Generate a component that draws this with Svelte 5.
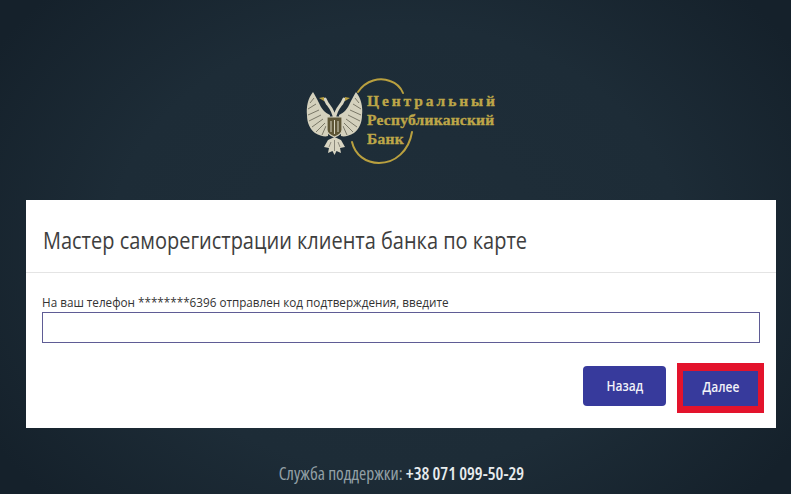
<script>
  const title = 'Мастер саморегистрации клиента банка по карте';
  const feathers = [
    'M24 33L20 38', 'M26 39L18 44', 'M29 45L18 50', 'M31 50L19 56', 'M33 54L22 62', 'M35 58L26 67', 'M36 61L32 70'
  ];
</script>

<div class="page">
  <div class="logo">
    <svg class="mark" viewBox="0 0 220 110" width="220" height="110" aria-hidden="true">
      <path class="ring" d="M68 27C76 15 90 12 100 16C106 18 111 23 113 28" />
      <path class="ring" d="M62 77C65 90 76 98 89 98C105 98 119 86 122 67" />
      <g class="wing">
        <path d="M23 27C18 33 16 42 17 50C17 58 20 64 25 68C30 71 35 72 38 71L40 50C35 48 31 43 29 38C27 34 25 30 23 27Z" fill="#d4d1bd" />
        {#each feathers as d}<path class="feather" {d} />{/each}
      </g>
      <g class="wing" transform="translate(89 0) scale(-1 1)">
        <path d="M23 27C18 33 16 42 17 50C17 58 20 64 25 68C30 71 35 72 38 71L40 50C35 48 31 43 29 38C27 34 25 30 23 27Z" fill="#d4d1bd" />
        {#each feathers as d}<path class="feather" {d} />{/each}
      </g>
      <path class="neck" d="M44.5 54C44 46 40 42 37 38L35 34M44.5 54C45 46 49 42 52 38L54 34" />
      <path d="M34 32L29 33L34 36ZM55 32L60 33L55 36Z" fill="#b9a03f" />
      <path d="M37 52H52V65C52 69 47 71 44.5 72C42 71 37 69 37 65Z" fill="#5e5636" stroke="#d4d1bd" stroke-width="1.2" />
      <path d="M41 56V67M44.5 55V69M48 56V67" stroke="#d8d5c2" stroke-width="1" />
      <path d="M38 75L44.5 72L51 75L55 82L50 83L51 88L46.5 86L44.5 90L42.5 86L38 88L39 83L34 82Z" fill="#d8d5c2" />
      <path d="M44.5 75V86M41 77L39 82M48 77L50 82" stroke="#77756a" stroke-width=".8" fill="none" />
    </svg>
    <div class="wordmark">
      <div class="wide">Центральный</div>
      <div>Республиканский</div>
      <div>Банк</div>
    </div>
  </div>

  <section class="card">
    <header class="head"><h1>{title}</h1></header>
    <div class="body">
      <label for="code">На ваш телефон ********6396 отправлен код подтверждения, введите</label>
      <input id="code" type="text" />
      <div class="actions">
        <button type="button" class="back"><span>Назад</span></button>
        <div class="highlight"><button type="button"><span>Далее</span></button></div>
      </div>
    </div>
  </section>

  <footer>Служба поддержки: <b>+38 071 099-50-29</b></footer>
</div>

<style>
  :global(body) { margin: 0; background: #1b2a35; }
  .page {
    width: 791px;
    height: 494px;
    overflow: hidden;
    box-sizing: border-box;
    padding-top: 65px;
    display: flex;
    flex-direction: column;
    align-items: center;
    background: radial-gradient(ellipse 60% 75% at 50% 50%, #1f2e39 0%, #1d2c37 60%, #15212b 100%);
    font-family: "Open Sans", sans-serif;
  }
  .logo {
    position: relative;
    width: 220px;
    height: 110px;
    margin-left: 9px;
    flex: none;
  }
  .mark { display: block; }
  .ring { fill: none; stroke: #b9a03f; stroke-width: 2; stroke-linecap: round; }
  .feather { stroke: #6f6d5e; stroke-width: .9; fill: none; }
  .neck { fill: none; stroke: #d8d5c2; stroke-width: 3; stroke-linecap: round; }
  .wordmark {
    position: absolute;
    left: 77px;
    top: 26px;
    color: #bda648;
    font: bold 15.5px/19px "Liberation Serif", serif;
    letter-spacing: .25px;
    -webkit-text-stroke: .35px #bda648;
    white-space: nowrap;
  }
  .wide { letter-spacing: 2.9px; }
  .card {
    margin-top: 25px;
    width: 750px;
    height: 228px;
    margin-left: 11px;
    background: #fff;
    flex: none;
    box-sizing: border-box;
  }
  .head {
    height: 73px;
    box-sizing: border-box;
    border-bottom: 1px solid #e4e4e4;
    padding: 0 17px;
    display: flex;
    align-items: center;
  }
  h1 {
    margin: 6px 0 0;
    font-weight: 400;
    font-size: 24.5px;
    color: #3e3e3e;
    white-space: nowrap;
    transform: scaleX(.815);
    transform-origin: left center;
  }
  .body { padding: 20px 16px 0 16px; display: flex; flex-direction: column; }
  label {
    font-size: 13px;
    line-height: 18px;
    margin-bottom: 1px;
    color: #333;
    white-space: nowrap;
    transform: scaleX(.9);
    transform-origin: left center;
  }
  input {
    width: 718px;
    height: 31px;
    box-sizing: border-box;
    border: 1.5px solid #5f5c95;
    margin: 0;
    padding: 0;
    background: #fff;
  }
  .actions { display: flex; justify-content: flex-end; align-items: flex-start; gap: 11px; margin-top: 20px; margin-right: -4px; }
  button {
    width: 83px;
    height: 40px;
    border: 0;
    border-radius: 4px;
    background: #373a9c;
    color: #f2f2f8;
    font: 600 15px "Open Sans", sans-serif;
    padding: 0 0 3px;
  }
  button span { display: inline-block; transform: scaleX(.8); }
  .back { margin-top: 3px; }
  .highlight {
    width: 87px;
    height: 50px;
    box-sizing: border-box;
    border: 6px solid #e3132c;
    border-top-width: 8px;
    border-bottom-width: 7px;
    display: flex;
  }
  .highlight button { width: 75px; height: 35px; border-radius: 0; padding-bottom: 6px; }
  footer {
    margin-top: 33px;
    margin-left: 12px;
    font-size: 17.5px;
    font-stretch: 75%;
    color: #93a0a6;
    white-space: nowrap;
  }
  footer b { font-weight: 600; color: #e8ecee; }
</style>
